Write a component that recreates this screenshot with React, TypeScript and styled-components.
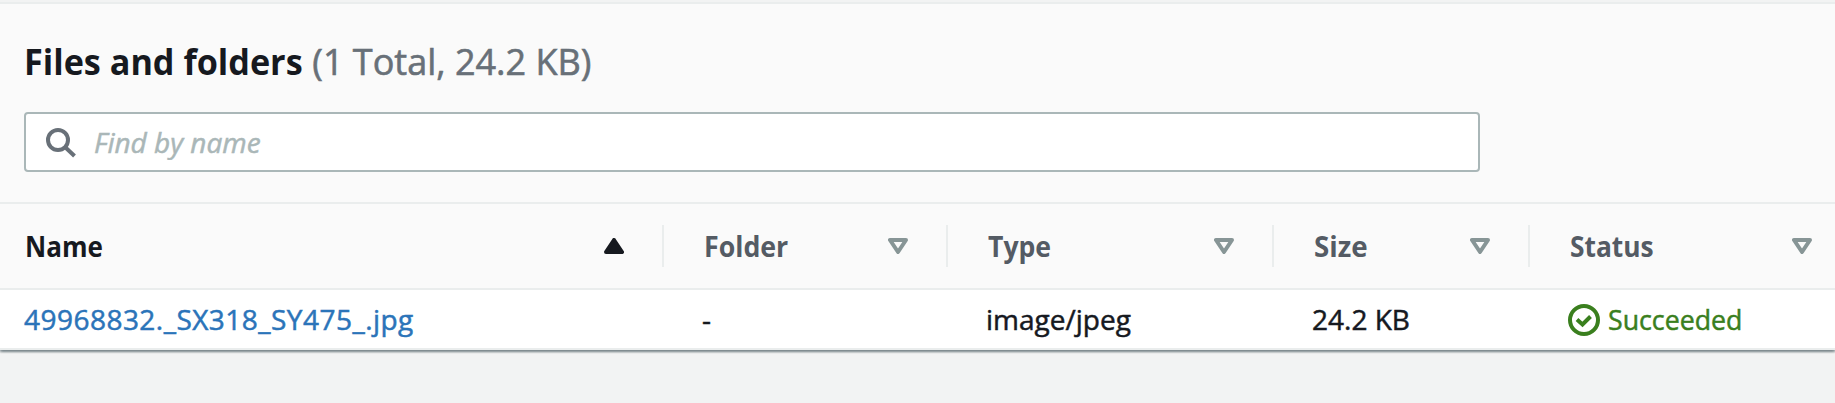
import React from "react";
import styled, { createGlobalStyle } from "styled-components";

const GlobalStyle = createGlobalStyle`
  *, *::before, *::after { box-sizing: border-box; }
  body {
    margin: 0;
    background: #f2f3f3;
    color: #16191f;
    font-family: "Open Sans", "Noto Sans", sans-serif;
    font-size: 28px;
    line-height: 36px;
  }
`;

const columns = "664px 284px 326px 256px 1fr";

const Page = styled.main`
  min-height: 100vh;
  padding-top: 2px;
  overflow: hidden;
`;

const Panel = styled.section`
  border-top: 2px solid #eaeded;
  background: #fafafa;
  box-shadow:
    0 2px 2px 0 rgba(0, 28, 36, 0.3),
    2px 2px 2px 0 rgba(0, 28, 36, 0.15),
    -2px 2px 2px 0 rgba(0, 28, 36, 0.15);
`;

const PanelHeader = styled.header`
  height: 198px;
  padding: 36px 24px 0;
`;

const Title = styled.h2`
  display: flex;
  margin: 0 0 28px;
  font-size: 36px;
  line-height: 44px;
  font-weight: 700;
  white-space: nowrap;
`;

const TitleText = styled.span`
  transform: scaleX(0.95);
  transform-origin: left;
`;

const Counter = styled.span`
  margin-left: -5px;
  color: #687078;
  font-weight: 400;
  -webkit-text-stroke: 0.6px currentColor;
`;

const SearchField = styled.label`
  display: flex;
  align-items: center;
  width: 1456px;
  height: 60px;
  padding-left: 20px;
  gap: 16px;
  border: 2px solid #aab7b8;
  border-radius: 4px;
  background: #fff;
`;

const SearchInput = styled.input`
  flex: 1;
  height: 36px;
  padding: 0;
  border: 0;
  outline: 0;
  background: transparent;
  font: inherit;
  &::placeholder {
    color: #aab7b8;
    font-style: italic;
    opacity: 1;
    -webkit-text-stroke: 0.5px #aab7b8;
  }
`;

const HeadRow = styled.div`
  display: grid;
  grid-template-columns: ${columns};
  align-items: center;
  height: 88px;
  border-top: 2px solid #eaeded;
  border-bottom: 2px solid #eaeded;
`;

const HeadCell = styled.div<{ $first?: boolean; $last?: boolean; $sorted?: boolean }>`
  display: flex;
  justify-content: space-between;
  align-items: center;
  height: 42px;
  padding-left: ${(p) => (p.$first ? 25 : 40)}px;
  padding-right: ${(p) => (p.$last ? 23 : 38)}px;
  border-right: ${(p) => (p.$last ? 0 : 2)}px solid #eaeded;
  color: ${(p) => (p.$sorted ? "#16191f" : "#545b64")};
  font-weight: 700;
`;

const HeadLabel = styled.span<{ $condense: number }>`
  padding-bottom: 1px;
  transform: scaleX(${(p) => p.$condense});
  transform-origin: left;
`;

const SortIcon = styled.svg`
  display: block;
  width: 20px;
  height: 16px;
`;

const BodyRow = styled.div`
  display: grid;
  grid-template-columns: ${columns};
  align-items: center;
  height: 60px;
  border-bottom: 2px solid #eaeded;
  background: #fff;
  -webkit-text-stroke: 0.5px currentColor;
`;

const Cell = styled.div`
  display: flex;
  align-items: center;
  padding-left: 38px;
  white-space: nowrap;
`;

const NameCell = styled(Cell)`
  padding-left: 24px;
`;

const FileLink = styled.a`
  color: #2b74b9;
  letter-spacing: 0.47px;
  text-decoration: none;
`;

const Status = styled.span`
  display: flex;
  align-items: center;
  gap: 8px;
  color: #3a7f1e;
`;

const StatusIcon = styled.svg`
  margin-top: 2px;
`;

const StatusText = styled.span`
  transform: scaleX(0.955);
  transform-origin: left;
`;

const Sort = ({ sorted }: { sorted?: boolean }) => (
  <SortIcon viewBox="0 0 20 16" aria-hidden="true">
    {sorted ? (
      <path d="M10 2 18 14H2Z" fill="#16191f" stroke="#16191f" strokeWidth="4" strokeLinejoin="round" />
    ) : (
      <path d="M2 2H18L10 14Z" fill="none" stroke="#879596" strokeWidth="4" strokeLinejoin="round" />
    )}
  </SortIcon>
);

const SearchIcon = () => (
  <svg width="32" height="32" viewBox="0 0 32 32" fill="none" stroke="#687078" strokeWidth="4" aria-hidden="true">
    <circle cx="12" cy="14" r="10" />
    <path d="M19 21 28.5 30" />
  </svg>
);

const SuccessIcon = () => (
  <StatusIcon width="32" height="32" viewBox="0 0 32 32" fill="none" stroke="#3a7f1e" strokeWidth="4" aria-hidden="true">
    <circle cx="16" cy="16" r="14" />
    <path d="M9 15.5 14.5 20.5 22.5 12.5" />
  </StatusIcon>
);

const heads = [
  { label: "Name", condense: 0.93 },
  { label: "Folder", condense: 0.955 },
  { label: "Type", condense: 0.95 },
  { label: "Size", condense: 0.99 },
  { label: "Status", condense: 0.94 },
];

export default function App() {
  return (
    <>
      <GlobalStyle />
      <Page>
        <Panel>
          <PanelHeader>
            <Title>
              <TitleText>Files and folders</TitleText>
              <Counter>(1 Total, 24.2 KB)</Counter>
            </Title>
            <SearchField>
              <SearchIcon />
              <SearchInput placeholder="Find by name" aria-label="Find by name" />
            </SearchField>
          </PanelHeader>
          <HeadRow>
            {heads.map(({ label, condense }, i) => (
              <HeadCell key={label} $first={i === 0} $sorted={i === 0} $last={i === heads.length - 1}>
                <HeadLabel $condense={condense}>{label}</HeadLabel>
                <Sort sorted={i === 0} />
              </HeadCell>
            ))}
          </HeadRow>
          <BodyRow>
            <NameCell>
              <FileLink href="#">49968832._SX318_SY475_.jpg</FileLink>
            </NameCell>
            <Cell>-</Cell>
            <Cell>image/jpeg</Cell>
            <Cell>24.2 KB</Cell>
            <Cell>
              <Status>
                <SuccessIcon />
                <StatusText>Succeeded</StatusText>
              </Status>
            </Cell>
          </BodyRow>
        </Panel>
      </Page>
    </>
  );
}
